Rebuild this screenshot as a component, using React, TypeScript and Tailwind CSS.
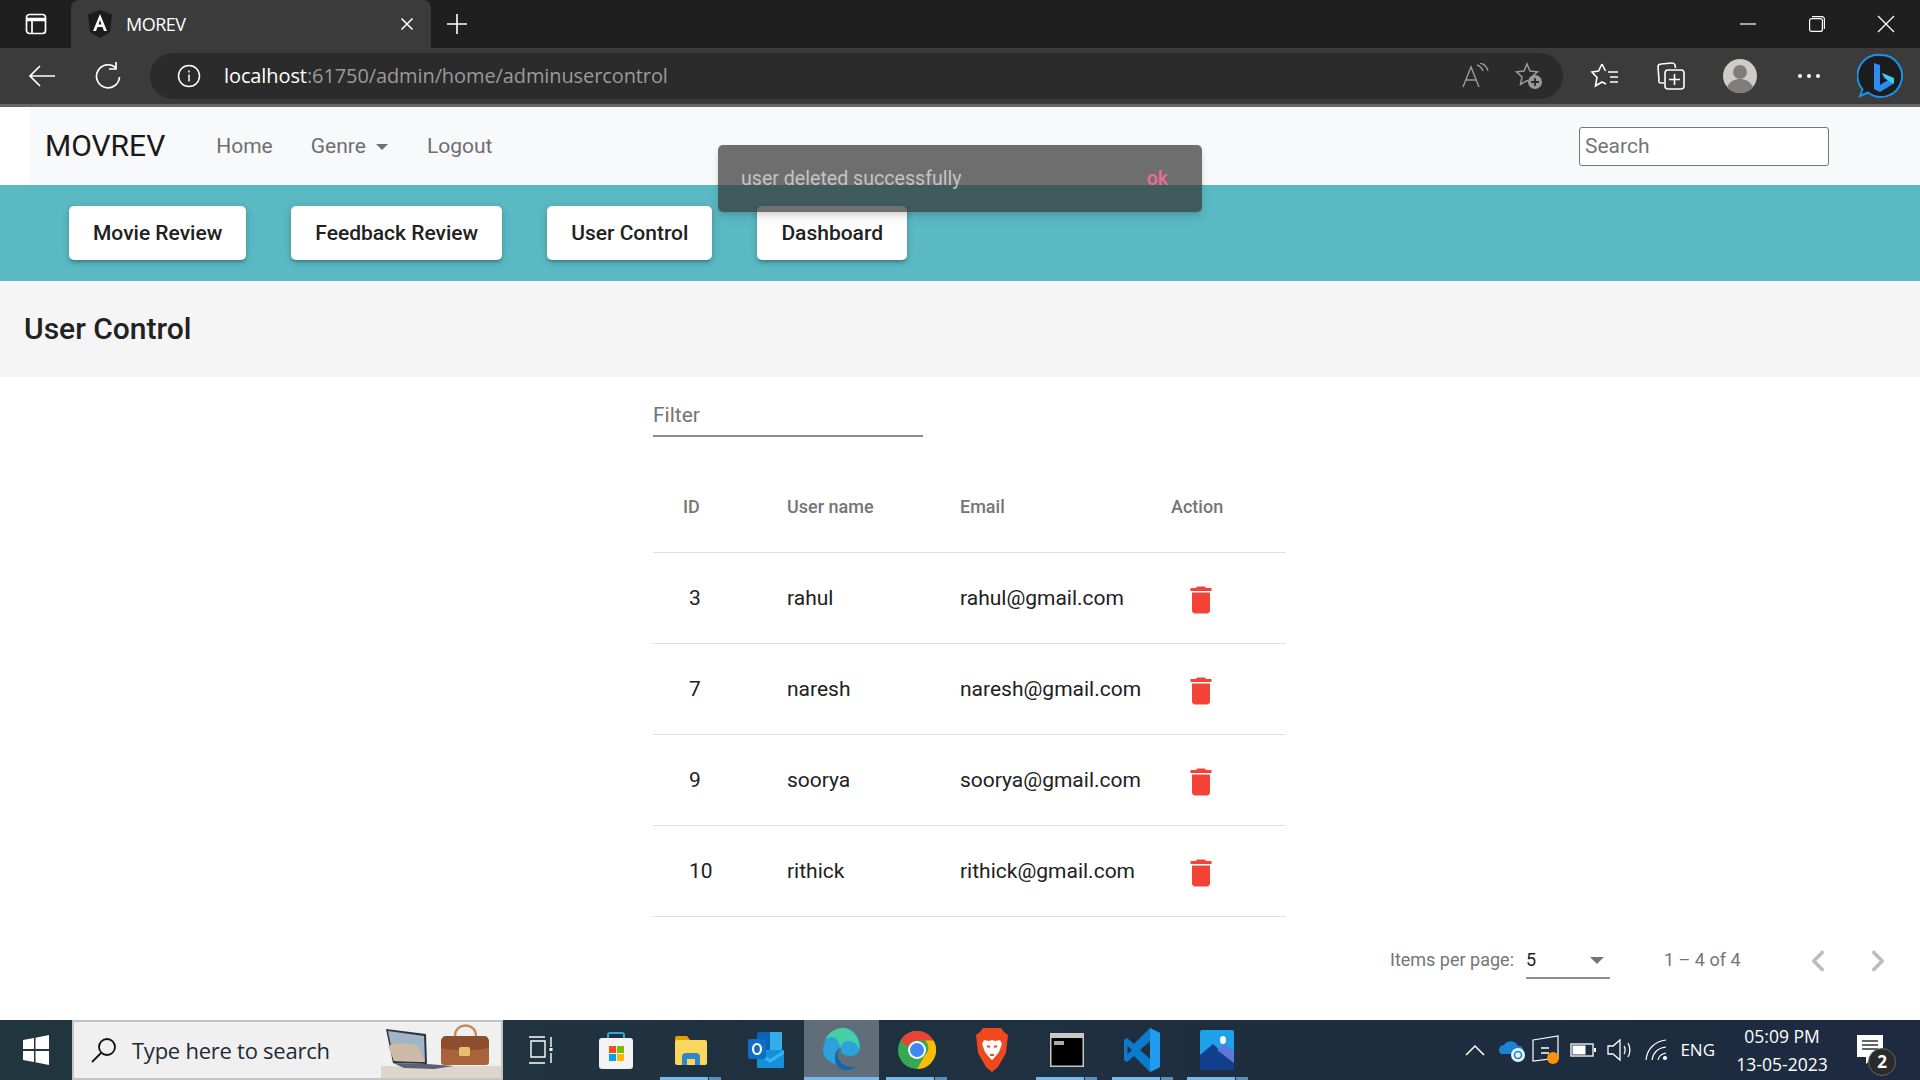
import { ChevronLeft, ChevronRight } from "lucide-react";

const users = [
  { id: 3, name: "rahul", email: "rahul@gmail.com" },
  { id: 7, name: "naresh", email: "naresh@gmail.com" },
  { id: 9, name: "soorya", email: "soorya@gmail.com" },
  { id: 10, name: "rithick", email: "rithick@gmail.com" },
];

const adminButtons = ["Movie Review", "Feedback Review", "User Control", "Dashboard"];

function BrowserTabs() {
  return (
    <div className="flex h-[48px] items-end bg-[#1f1f1f] text-white">
      <div className="flex h-[48px] w-[71px] items-center justify-center">
        <svg width="22" height="22" viewBox="0 0 22 22" fill="none" stroke="#fff" strokeWidth="1.7">
          <rect x="1.5" y="1.5" width="19" height="19" rx="3" />
          <path d="M2 6.5h18" strokeWidth="3.5" />
          <path d="M7 7v13" />
        </svg>
      </div>
      <div className="flex h-[48px] w-[360px] items-center rounded-t-[8px] bg-[#3b3b3b] pl-[17px] pr-[17px]">
        <svg width="24" height="28" viewBox="0 0 24 28">
          <path d="M12 0 L24 4.5 L22 22 L12 28 L2 22 L0 4.5 Z" fill="#1c1c1c" />
          <path d="M12 4 L5 21 H8 L9.5 17 H14.5 L16 21 H19 Z M10.5 14.5 L12 10 L13.5 14.5 Z" fill="#fff" fillRule="evenodd" />
        </svg>
        <span className="ml-[14px] font-['Open_Sans',sans-serif] text-[18px] tracking-[-0.5px]">MOREV</span>
        <svg className="ml-auto" width="14" height="14" viewBox="0 0 14 14" stroke="#fff" strokeWidth="1.5">
          <path d="M1.5 1.5l11 11M12.5 1.5l-11 11" />
        </svg>
      </div>
      <div className="flex h-[48px] w-[52px] items-center justify-center">
        <svg width="22" height="22" viewBox="0 0 22 22" stroke="#fff" strokeWidth="1.6">
          <path d="M11 1v20M1 11h20" />
        </svg>
      </div>
      <div className="ml-auto flex h-[48px] items-center pr-[25px]">
        <svg className="mr-[53px]" width="16" height="2" viewBox="0 0 16 2" stroke="#fff" strokeWidth="1.2">
          <path d="M0 1h16" />
        </svg>
        <svg className="mr-[52px]" width="16" height="16" viewBox="0 0 16 16" fill="none" stroke="#fff" strokeWidth="1.2">
          <rect x="0.6" y="2.6" width="12.8" height="12.8" rx="2" />
          <path d="M3 .6h10a2.4 2.4 0 0 1 2.4 2.4v10" />
        </svg>
        <svg width="18" height="18" viewBox="0 0 18 18" stroke="#fff" strokeWidth="1.3">
          <path d="M1 1l16 16M17 1L1 17" />
        </svg>
      </div>
    </div>
  );
}

function AddressBar() {
  return (
    <div className="flex h-[59px] items-center border-b-[3px] border-[#666] bg-[#3b3b3b]">
      <div className="flex w-[84px] justify-center">
        <svg width="28" height="24" viewBox="0 0 28 24" fill="none" stroke="#fff" strokeWidth="1.7">
          <path d="M27 12H2M12 2L2 12l10 10" />
        </svg>
      </div>
      <svg className="ml-[11px]" width="26" height="28" viewBox="0 0 26 28" fill="none" stroke="#fff" strokeWidth="1.7">
        <path d="M21 6a11.5 11.5 0 1 0 3.5 9" />
        <path d="M21 0v7h-7" />
      </svg>
      <div className="ml-[29px] flex h-[46px] w-[1413px] items-center rounded-full bg-[#2b2b2b] pl-[27px] pr-[20px]">
        <svg width="24" height="24" viewBox="0 0 24 24" fill="none" stroke="#fff" strokeWidth="1.5">
          <circle cx="12" cy="12" r="10.5" />
          <path d="M12 10.5v7M12 6.5v2" />
        </svg>
        <span className="ml-[23px] font-['Open_Sans',sans-serif] text-[20px] tracking-[-0.1px] text-white">
          localhost<span className="text-[#9a9a9a]">:61750/admin/home/adminusercontrol</span>
        </span>
        <div className="ml-auto flex items-center gap-[26px]">
          <svg width="28" height="26" viewBox="0 0 28 26" fill="none" stroke="#9a9a9a" strokeWidth="1.4">
            <path d="M2 24L10 4l8 20M5 17h10M16 2c3 1 5 3 6 6M19 0c4 1 7 4 8 8" />
          </svg>
          <svg width="28" height="28" viewBox="0 0 28 28">
            <path d="M12 2l3 7 7.5.8-5.5 5 1.6 7.5L12 18.500 5.500 22.500 7 15 1.500 9.800 9 9z" fill="none" stroke="#9a9a9a" strokeWidth="1.5" />
            <circle cx="20" cy="20" r="7" fill="#9a9a9a" />
            <path d="M20 16v8M16 20h8" stroke="#2b2b2b" strokeWidth="1.8" />
          </svg>
        </div>
      </div>
      <div className="ml-[27px] flex items-center">
        <svg width="30" height="28" viewBox="0 0 30 28" fill="none" stroke="#fff" strokeWidth="1.6">
          <path d="M12 2l-3.500 7L2 10l5 5.500L5.500 24 12 20l4 2M12 2l3.500 7" />
          <path d="M18 10h10M20 15h8M20 20h8" />
        </svg>
        <svg className="ml-[36px]" width="30" height="30" viewBox="0 0 30 30" fill="none" stroke="#fff" strokeWidth="1.6">
          <path d="M8 22H5a2 2 0 0 1-2-3L2 6a3 3 0 0 1 3-3l11-1a3 3 0 0 1 3 2l.5 3" />
          <rect x="9" y="9" width="19" height="19" rx="3" />
          <path d="M18.500 13v11M13 18.500h11" />
        </svg>
        <svg className="ml-[37px]" width="34" height="34" viewBox="0 0 34 34">
          <circle cx="17" cy="17" r="17" fill="#cdccc8" />
          <circle cx="17" cy="13" r="7" fill="#7f7e7b" />
          <path d="M4 28c3-6 8-8 13-8s10 2 13 8a17 17 0 0 1-26 0z" fill="#7f7e7b" />
        </svg>
        <div className="ml-[41px] flex gap-[5px]">
          <div className="size-[4px] rounded-full bg-white" />
          <div className="size-[4px] rounded-full bg-white" />
          <div className="size-[4px] rounded-full bg-white" />
        </div>
        <svg className="ml-[37px]" width="48" height="48" viewBox="0 0 48 48">
          <path d="M24 3a21 21 0 1 1-13 37.500L3 44l2.500-6.500A21 21 0 0 1 24 3z" fill="#1c1c1c" stroke="#1a94e8" strokeWidth="2" />
          <path d="M17 11l6 2v20l8-5-4-2-2-5 11 5v6l-13 8-6-3z" fill="#2a8df0" />
          <path d="M25 21l12 5v6l-8-5z" fill="#45c9ea" />
        </svg>
      </div>
    </div>
  );
}

function NavBar() {
  return (
    <div className="ml-[30px] flex h-[78px] items-center bg-[#f8f9fa] pl-[15px] font-['Roboto',sans-serif]">
      <span className="text-[30px] leading-none text-[#1a1a1a]">MOVREV</span>
      <div className="ml-[51px] flex items-center pt-[1px] text-[21px] text-[#6f6f6f]">
        <span>Home</span>
        <span className="ml-[38px]">Genre</span>
        <span className="ml-[10px] size-0 border-x-[6px] border-t-[6px] border-x-transparent border-t-[#6f6f6f]" />
        <span className="ml-[39px]">Logout</span>
      </div>
      <div className="mr-[91px] ml-auto mt-[1px] flex h-[39px] w-[250px] items-center rounded-[3px] border border-[#767676] bg-white pl-[5px] text-[21px] text-[#757575]">
        Search
      </div>
    </div>
  );
}

function TrashIcon() {
  return (
    <svg width="36" height="36" viewBox="0 0 24 24" fill="#f44336">
      <path d="M6 19c0 1.100.9 2 2 2h8c1.100 0 2-.9 2-2V7H6v12zM19 4h-3.500l-1-1h-5l-1 1H5v2h14V4z" />
    </svg>
  );
}

function UserTable() {
  return (
    <table className="w-[633px] table-fixed border-collapse">
      <thead>
        <tr className="h-[92px] text-left text-[18px] text-[#757575]">
          <th className="w-[134px] pl-[30px] pt-[2px] font-medium">ID</th>
          <th className="w-[173px] pt-[2px] font-medium">User name</th>
          <th className="w-[211px] pt-[2px] font-medium">Email</th>
          <th className="pt-[2px] font-medium">Action</th>
        </tr>
      </thead>
      <tbody>
        {users.map((u) => (
          <tr key={u.id} className="h-[91px] border-t border-[#e0e0e0] text-[21px] text-[#212121]">
            <td className="pl-[36px] pt-[2px]">{u.id}</td>
            <td className="pt-[2px]">{u.name}</td>
            <td className="pt-[2px]">{u.email}</td>
            <td className="pl-[12px] pt-[4px]">
              <TrashIcon />
            </td>
          </tr>
        ))}
        <tr className="border-t border-[#e0e0e0]" />
      </tbody>
    </table>
  );
}

function Paginator() {
  return (
    <div className="flex h-[104px] items-center pb-[14px] pl-[1390px] text-[18px] text-[#757575]">
      <span className="w-[136px] whitespace-nowrap pb-[3px]">Items per page:</span>
      <div className="flex h-[36px] w-[84px] items-center justify-between border-b-2 border-[#8c8c8c] pr-[6px] text-[#212121]">
        <span className="pb-[2px]">5</span>
        <span className="size-0 border-x-[7px] border-t-[7px] border-x-transparent border-t-[#757575]" />
      </div>
      <span className="ml-[54px] w-[76px] whitespace-nowrap pb-[3px]">1 – 4 of 4</span>
      <ChevronLeft className="ml-[61px] text-[#bdbdbd]" size={34} strokeWidth={2.6} />
      <ChevronRight className="ml-[26px] text-[#bdbdbd]" size={34} strokeWidth={2.6} />
    </div>
  );
}

function AppIcon({ children, underline, active }: { children: React.ReactNode; underline?: boolean; active?: boolean }) {
  return (
    <div className={`relative flex h-[60px] w-[75.2px] items-center justify-center ${active ? "bg-[#5f6e78]" : ""}`}>
      {children}
      {underline && (
        <div className={`absolute bottom-0 flex h-[3px] ${active ? "w-full" : "w-[61px]"}`}>
          <div className="flex-1 bg-[#76b9ed]" />
          {!active && <div className="ml-[1px] w-[12px] bg-[#5b8fb8]" />}
        </div>
      )}
    </div>
  );
}

function Taskbar() {
  return (
    <div className="flex h-[60px] items-center bg-linear-to-r from-[#21363f] to-[#1d2a40] font-['Open_Sans',sans-serif] text-white">
      <div className="flex w-[72px] justify-center">
        <svg width="26" height="30" viewBox="0 0 26 30" fill="#fff">
          <path d="M0 5l11-2v11H0zM12.500 2.700L26 0v14H12.500zM0 16h11v11L0 25zM12.500 16H26v14l-13.500-2.700z" />
        </svg>
      </div>
      <div className="flex h-[60px] w-[431px] items-center overflow-hidden border-2 border-[#c4c4c4] bg-[#f0f0f0] pl-[16px] text-[#1f2a36]">
        <svg width="28" height="28" viewBox="0 0 28 28" fill="none" stroke="#111" strokeWidth="1.8">
          <circle cx="17" cy="11" r="8" />
          <path d="M11 17L2 26" />
        </svg>
        <span className="ml-[14px] font-['Open_Sans',sans-serif] text-[22px] tracking-[-0.25px]">Type here to search</span>
        <svg className="ml-auto" width="120" height="56" viewBox="0 0 120 56">
          <path d="M0 44h120v12H0z" fill="#ded6cc" />
          <path d="M5 7l40 5 1 30L12 41z" fill="#2f3442" />
          <path d="M7 9l36 5 1 26-31-1z" fill="#9fb6c7" />
          <path d="M7 24c10-4 22-3 30 0l7 16-31-1z" fill="#cdbba8" />
          <path d="M12 41l34 1 27 2-20 3-30-1z" fill="#5a6272" />
          <path d="M60 20c0-3 2-6 5-6h38c3 0 5 3 5 6v20c0 2-1 3-3 3H63c-2 0-3-1-3-3z" fill="#a8623c" />
          <path d="M60 20c0-3 2-6 5-6h38c3 0 5 3 5 6v6c-14 3-34 3-48 0z" fill="#8b4f30" />
          <path d="M74 14c0-14 21-14 21 0" fill="none" stroke="#c88a58" strokeWidth="2.500" />
          <rect x="78" y="25" width="11" height="9" rx="1.500" fill="#e8bf6d" />
        </svg>
      </div>
      <AppIcon>
        <svg width="26" height="28" viewBox="0 0 26 28" fill="none" stroke="#fff" strokeWidth="1.4">
          <path d="M1 1h16M1 27h16M3 5h14v16H3zM23 1v10M23 17v10" />
          <rect x="21.500" y="12" width="3" height="3" fill="#fff" stroke="none" />
        </svg>
      </AppIcon>
      <AppIcon>
        <svg width="36" height="38" viewBox="0 0 36 38">
          <path d="M10 8V4a2 2 0 0 1 2-2h12a2 2 0 0 1 2 2v4" fill="none" stroke="#2ea8e0" strokeWidth="2" />
          <rect x="1" y="7" width="34" height="31" rx="3" fill="#f3f3f3" />
          <rect x="11" y="15" width="7" height="7" fill="#f25022" />
          <rect x="19" y="15" width="7" height="7" fill="#7fba00" />
          <rect x="11" y="23" width="7" height="7" fill="#00a4ef" />
          <rect x="19" y="23" width="7" height="7" fill="#ffb900" />
        </svg>
      </AppIcon>
      <AppIcon underline>
        <svg width="34" height="32" viewBox="0 0 34 32">
          <path d="M1 4a2 2 0 0 1 2-2h10l3 4v6H1z" fill="#e0a100" />
          <rect x="1" y="6" width="32" height="25" rx="2" fill="#fbd75b" />
          <path d="M8 31v-8a4 4 0 0 1 4-4h10a4 4 0 0 1 4 4v8h-5v-6h-8v6z" fill="#2f87c9" />
        </svg>
      </AppIcon>
      <AppIcon>
        <svg width="36" height="38" viewBox="0 0 36 38">
          <rect x="9" y="1" width="25" height="18" rx="1.500" fill="#0b63b5" />
          <rect x="22" y="1" width="12" height="18" fill="#33aee8" />
          <rect x="9" y="19" width="27" height="18" rx="1.500" fill="#1590d9" />
          <path d="M9 19l13 9 14-9v4l-14 9-13-9z" fill="#34b4ee" />
          <rect x="0" y="8" width="18" height="20" rx="2" fill="#0f6fc6" />
          <ellipse cx="9" cy="18" rx="4" ry="5" fill="none" stroke="#fff" strokeWidth="2.200" />
        </svg>
      </AppIcon>
      <AppIcon underline active>
        <svg width="38" height="44" viewBox="0 0 38 44">
          <path d="M1 22C2 8 12 0 21 0c10 0 17 8 17 19 0 6-5 9-10 9-6 0-10-3-9-8-7 1-8 10-3 17C8 35 1 30 1 22z" fill="#2aa3dd" />
          <path d="M19 20c0-8 10-9 15-4 3 3 4 6 4 6 0-12-8-22-17-22-6 0-14 3-18 12 6-5 12-5 16 8z" fill="#46cfa5" />
          <path d="M15 37c4 6 13 7 20 1-5 2-14 1-18-6-3-5-1-10 2-12-6 2-8 11-4 17z" fill="#1266b3" />
        </svg>
      </AppIcon>
      <AppIcon underline>
        <svg width="38" height="44" viewBox="0 0 38 38">
          <circle cx="19" cy="19" r="19" fill="#34a853" />
          <path d="M19 0a19 19 0 0 1 16.500 9.500H19a9.500 9.500 0 0 0-9 6.500L2.500 9.500A19 19 0 0 1 19 0z" fill="#ea4335" />
          <path d="M35.500 9.500A19 19 0 0 1 19 38l8-14a9.500 9.500 0 0 0 0-14.500z" fill="#fbbc05" />
          <circle cx="19" cy="19" r="9" fill="#fff" />
          <circle cx="19" cy="19" r="7" fill="#4285f4" />
        </svg>
      </AppIcon>
      <AppIcon>
        <svg width="32" height="44" viewBox="0 0 32 44">
          <path d="M7 0h18l3 4 4 3-2 18-8 14-6 5-6-5-8-14L0 7l4-3z" fill="#f1491f" />
          <path d="M8 12l5 1 3-1 3 1 5-1 2 4-3 8-4 5-3 3-3-3-4-5-3-8z" fill="#fff" />
          <path d="M11 18l3 1M21 18l-3 1M14 27h4" stroke="#f1491f" strokeWidth="2" />
        </svg>
      </AppIcon>
      <AppIcon underline>
        <svg width="34" height="34" viewBox="0 0 34 34">
          <rect width="34" height="34" fill="#c8c8c8" />
          <rect x="1.500" y="5" width="31" height="27.500" fill="#000" />
          <path d="M4 8h10v4H4z" fill="#aaa" />
        </svg>
      </AppIcon>
      <AppIcon underline>
        <svg width="36" height="44" viewBox="0 0 36 44">
          <path d="M26 0l10 5v34l-10 5-16-16-7 6-3-2v-20l3-2 7 6z" fill="#0a7ccc" />
          <path d="M26 0l10 5v34l-10 5z" fill="#1f9cf0" />
          <path d="M26 13l-10 9 10 9z" fill="#1f2f3f" />
          <path d="M3.500 18l4.500 4-4.500 4z" fill="#1f2f3f" />
        </svg>
      </AppIcon>
      <AppIcon underline>
        <svg width="34" height="40" viewBox="0 0 34 40">
          <rect width="34" height="40" rx="2" fill="#1da1e8" />
          <path d="M0 25l13-11 21 19v7H0z" fill="#123f8c" />
          <path d="M17 20l8-6 9 8v11z" fill="#5f77d8" />
          <ellipse cx="23" cy="10" rx="3" ry="4" fill="#fff" />
        </svg>
      </AppIcon>
      <div className="ml-auto flex h-full items-center">
        <svg width="20" height="12" viewBox="0 0 20 12" fill="none" stroke="#fff" strokeWidth="1.500">
          <path d="M1 11l9-9 9 9" />
        </svg>
        <svg className="ml-[14px]" width="27" height="24" viewBox="0 0 27 24">
          <path d="M2 16a5 5 0 0 1 3-9 8 8 0 0 1 14 1 4 4 0 0 1 2 8z" fill="#1a83d4" />
          <circle cx="19" cy="17" r="7" fill="#eaf4fb" />
          <circle cx="19" cy="17" r="3.500" fill="none" stroke="#1a83d4" strokeWidth="1.600" />
        </svg>
        <svg className="ml-[6px]" width="28" height="30" viewBox="0 0 28 30">
          <path d="M1 5l25-4v22L1 26z" fill="none" stroke="#fff" strokeWidth="1.200" />
          <path d="M9 13h8M17 18H9" stroke="#fff" strokeWidth="1.400" />
          <circle cx="21" cy="23" r="6" fill="#f7930e" />
        </svg>
        <svg className="ml-[10px]" width="26" height="14" viewBox="0 0 26 14">
          <rect x="1" y="1" width="22" height="12" fill="none" stroke="#fff" strokeWidth="1.300" />
          <rect x="2.500" y="2.500" width="13" height="9" fill="#fff" />
          <rect x="24" y="5" width="2" height="4" fill="#fff" />
        </svg>
        <svg className="ml-[11px]" width="26" height="24" viewBox="0 0 26 24" fill="none" stroke="#fff" strokeWidth="1.300">
          <path d="M1 8h5l7-6v20l-7-6H1zM17 8c1.500 2 1.500 6 0 8M21 5c2.500 4 2.500 10 0 14" />
        </svg>
        <svg className="ml-[12px]" width="24" height="22" viewBox="0 0 24 22" fill="none" stroke="#fff" strokeWidth="1.200">
          <path d="M1 21C2 10 10 2 21 1M7 21c1-7 6-12 14-13M13 21c.5-3 3-6 8-7" />
          <circle cx="20" cy="19" r="1.500" fill="#fff" />
        </svg>
        <span className="ml-[11px] text-[17px]">ENG</span>
        <div className="ml-[15px] flex w-[104px] flex-col items-center text-[17.5px] leading-[28px]">
          <span>05:09 PM</span>
          <span className="whitespace-nowrap">13-05-2023</span>
        </div>
        <div className="relative ml-[23px] mr-[37px]">
          <svg width="26" height="30" viewBox="0 0 26 30">
            <path d="M0 0h26v22h-10l-7 7v-7H0z" fill="#fff" />
            <path d="M5 6h16M5 10h16M5 14h16" stroke="#333" strokeWidth="1.300" />
          </svg>
          <span className="absolute -bottom-[11px] -right-[13px] flex size-[28px] items-center justify-center rounded-full border border-[#666] bg-[#2b2b2b] text-[17px] font-bold">
            2
          </span>
        </div>
      </div>
    </div>
  );
}

export default function App() {
  return (
    <div className="relative flex h-[1080px] w-[1920px] flex-col overflow-hidden bg-white font-['Roboto',sans-serif]">
      <BrowserTabs />
      <AddressBar />
      <NavBar />
      <div className="flex h-[96px] items-center gap-[45px] bg-[#5ab9c3] pl-[69px]">
        {adminButtons.map((b) => (
          <div
            key={b}
            className="flex h-[54px] items-center rounded-[5px] bg-white px-[24px] pt-[1px] text-[21px] font-medium text-[#212121] shadow-[0_3px_3px_-2px_rgba(0,0,0,.2),0_3px_4px_rgba(0,0,0,.14),0_1px_8px_rgba(0,0,0,.12)]"
          >
            {b}
          </div>
        ))}
      </div>
      <div className="flex h-[96px] items-center bg-[#f5f5f5] pb-[2px] pl-[24px] text-[30px] font-medium text-[#212121]">User Control</div>
      <div className="flex-1 pl-[653px]">
        <div className="mt-[18px] flex h-[42px] w-[270px] items-center border-b-2 border-[#8c8c8c] pt-[2px] text-[21px] text-[#757575]">Filter</div>
        <div className="mt-[23px]">
          <UserTable />
        </div>
      </div>
      <Paginator />
      <Taskbar />
      <div className="absolute left-[718px] top-[145px] flex h-[67px] w-[484px] items-center justify-between rounded-[5px] bg-[#333333]/70 pl-[23px] pr-[34px] text-[19.6px] text-[#c4c4c4] shadow-[0_3px_5px_-1px_rgba(0,0,0,.12),0_6px_10px_rgba(0,0,0,.08)]">
        <span>user deleted successfully</span>
        <span className="font-medium text-[#f06a9a]">ok</span>
      </div>
    </div>
  );
}
